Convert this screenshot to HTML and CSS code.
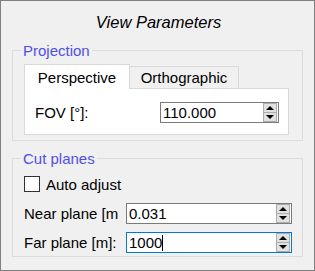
FILE: index.html
```html
<!DOCTYPE html>
<html>
<head>
<meta charset="utf-8">
<link rel="stylesheet" href="styles.css">
</head>
<body>
<div class="window">
  <div class="title">View Parameters</div>
  <fieldset class="group group-projection">
    <legend class="group-legend">Projection</legend>
    <div class="tabs">
      <div class="tab tab-active">Perspective</div>
      <div class="tab tab-inactive">Orthographic</div>
    </div>
    <div class="panel">
      <div class="row">
        <span class="fov-label">FOV [°]:</span>
        <div class="spin spin-fov">
          <span class="spin-value">110.000</span>
          <span class="spin-buttons"><span class="spin-btn"><span class="arrow-up"></span></span><span class="spin-btn"><span class="arrow-down"></span></span></span>
        </div>
      </div>
    </div>
  </fieldset>
  <fieldset class="group group-cut">
    <legend class="group-legend">Cut planes</legend>
    <div class="check-row">
      <span class="checkbox"></span>
      <span class="check-label">Auto adjust</span>
    </div>
    <div class="field-row field-near">
      <span class="field-label">Near plane [m]:</span>
      <div class="spin spin-wide">
        <span class="spin-value">0.031</span>
        <span class="spin-buttons"><span class="spin-btn"><span class="arrow-up"></span></span><span class="spin-btn"><span class="arrow-down"></span></span></span>
      </div>
    </div>
    <div class="field-row field-far">
      <span class="field-label">Far plane [m]:</span>
      <div class="spin spin-wide spin-focus">
        <span class="spin-value">1000<span class="caret"></span></span>
        <span class="spin-buttons"><span class="spin-btn"><span class="arrow-up"></span></span><span class="spin-btn"><span class="arrow-down"></span></span></span>
      </div>
    </div>
  </fieldset>
</div>
</body>
</html>
```
FILE: styles.css
```css
* { box-sizing: border-box; }
html, body { margin: 0; padding: 0; background: #f0f0f0; }
body {
  font-family: "Liberation Sans", Arial, sans-serif;
  font-size: 15px;
  color: #000;
}
.window {
  width: 315px;
  height: 271px;
  border: 1px solid #7f7f7f;
  background: #f0f0f0;
  display: flex;
  flex-direction: column;
}
.title {
  margin-top: 11px;
  height: 20px;
  line-height: 20px;
  text-align: center;
  font-style: italic;
  font-size: 16.5px;
  padding-left: 2px;
}
.group {
  margin: 0 11px;
  border: 1px solid #dcdcdc;
  min-width: 0;
}
.group-legend {
  margin-left: -3px;
  padding: 0 2px;
  line-height: 17px;
  color: #4f4fe8;
}
.group-projection {
  margin-top: 10px;
  padding: 5px 13px 5px 11px;
}
.group-cut {
  margin-top: 9px;
  padding: 9px 10px 3px 11px;
}
.tabs {
  display: flex;
  align-items: flex-end;
  height: 24px;
}
.tab {
  border: 1px solid #d9d9d9;
  border-bottom: none;
  line-height: 17px;
  text-align: center;
  white-space: nowrap;
}
.tab-active {
  width: 106px;
  height: 25px;
  padding-top: 4px;
  margin-bottom: -1px;
  background: #fff;
  position: relative;
  z-index: 1;
}
.tab-inactive {
  width: 110px;
  height: 22px;
  padding-top: 2px;
  margin-left: -1px;
  background: #f0f0f0;
}
.panel {
  border: 1px solid #d9d9d9;
  background: #fff;
  width: 265px;
  padding: 13px 0 11px 10px;
}
.row {
  display: flex;
  align-items: center;
}
.fov-label {
  width: 125px;
  line-height: 19px;
}
.spin {
  display: flex;
  height: 21px;
  border: 1px solid #7a7a7a;
  background: #fff;
}
.spin-fov { width: 119px; }
.spin-wide { flex: 1; }
.spin-focus { border-color: #0078d7; }
.spin-value {
  flex: 1;
  padding-left: 2px;
  line-height: 19px;
  white-space: nowrap;
}
.caret {
  display: inline-block;
  width: 1px;
  height: 16px;
  background: #000;
  vertical-align: -3px;
}
.spin-buttons {
  display: flex;
  flex-direction: column;
  width: 14px;
  margin-right: 1px;
}
.spin-btn {
  flex: 1;
  border: 1px solid #adadad;
  background: #e1e1e1;
  display: flex;
  align-items: center;
  justify-content: center;
}
.spin-btn + .spin-btn { border-top: none; }
.arrow-up {
  width: 0;
  height: 0;
  border-left: 4px solid transparent;
  border-right: 4px solid transparent;
  border-bottom: 4px solid #000;
}
.arrow-down {
  width: 0;
  height: 0;
  border-left: 4px solid transparent;
  border-right: 4px solid transparent;
  border-top: 4px solid #000;
}
.check-row {
  display: flex;
  align-items: center;
  gap: 6px;
  height: 16px;
}
.checkbox {
  width: 16px;
  height: 16px;
  border: 1px solid #333;
  background: #fff;
}
.check-label { line-height: 17px; }
.field-row {
  display: flex;
  align-items: center;
}
.field-near { margin-top: 11px; }
.field-far { margin-top: 8px; }
.field-label {
  width: 94px;
  margin-right: 8px;
  overflow: hidden;
  white-space: nowrap;
  line-height: 19px;
}
```
